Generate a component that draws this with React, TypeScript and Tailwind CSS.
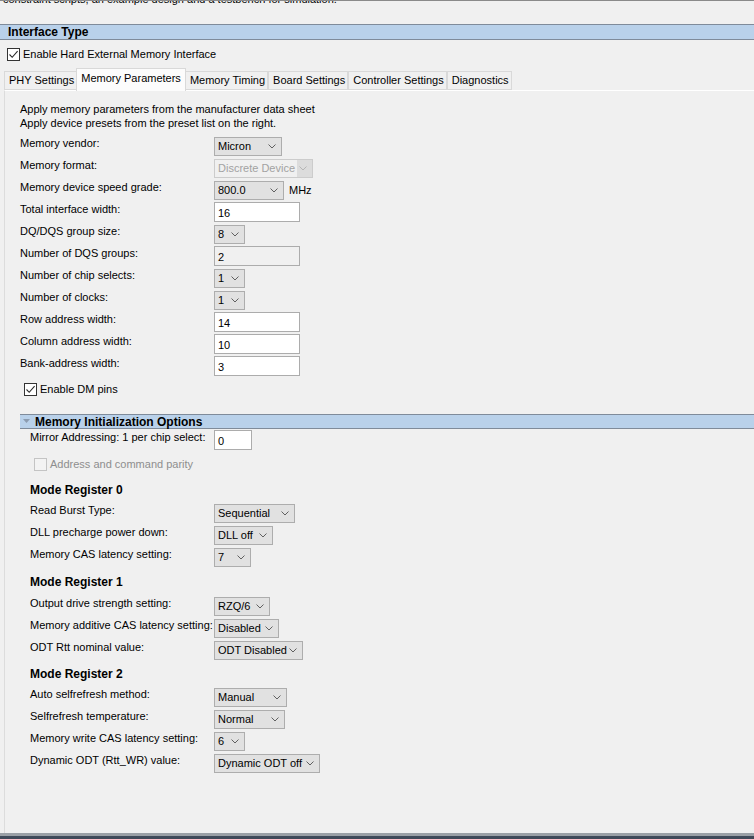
import React from "react";

const FONT = { fontFamily: '"Liberation Sans", Arial, sans-serif' };

function Check({ checked = false, disabled = false }: { checked?: boolean; disabled?: boolean }) {
  return (
    <span
      className={`flex h-[13px] w-[13px] shrink-0 items-center justify-center border ${
        disabled ? "border-[#c4c4c4] bg-[#f3f3f3]" : "border-[#333333] bg-white"
      }`}
    >
      {checked && (
        <svg width="11" height="11" viewBox="0 0 11 11">
          <path d="M1.5 5.5 L4.2 8.3 L9.6 2.2" fill="none" stroke="#2a2a2a" strokeWidth="1.1" />
        </svg>
      )}
    </span>
  );
}

function Chevron({ light = false }: { light?: boolean }) {
  return (
    <svg width="8" height="5" viewBox="0 0 8 5" className="shrink-0">
      <path d="M0.5 0.5 L4 4 L7.5 0.5" fill="none" stroke={light ? "#b5b5b5" : "#606060"} strokeWidth="1" />
    </svg>
  );
}

function Select({ value, w }: { value: string; w: string }) {
  return (
    <div
      className={`flex h-[19px] ${w} items-center justify-between border border-[#adadad] bg-[#e1e1e1] pl-[3px] pr-[5px] text-[11px] text-black`}
    >
      <span className="leading-none whitespace-nowrap">{value}</span>
      <Chevron />
    </div>
  );
}

function Field({ value, w = "w-[86px]", readOnly = false }: { value: string; w?: string; readOnly?: boolean }) {
  return (
    <div
      className={`flex h-[20px] ${w} items-center border border-[#acacac] ${
        readOnly ? "bg-[#f0f0f0]" : "bg-white"
      } px-[3px] pt-[2px] text-[11px] text-black`}
    >
      {value}
    </div>
  );
}

function Row({ label, labelW, children }: { label: string; labelW: string; children: React.ReactNode }) {
  return (
    <div className="flex h-[22px] items-center">
      <span className={`${labelW} mb-[5px] shrink-0 whitespace-nowrap text-[11px]`}>{label}</span>
      {children}
    </div>
  );
}

const tabs = ["PHY Settings", "Memory Parameters", "Memory Timing", "Board Settings", "Controller Settings", "Diagnostics"];

export default function App() {
  const L1 = "w-[194px]";
  const L2 = "w-[184px]";
  return (
    <div
      className="flex h-[839px] w-[754px] flex-col overflow-hidden border-t border-[#8a8a8a] bg-[#f0f0f0] text-black"
      style={FONT}
    >
      <div className="mt-[-9px] h-[14px] pl-[3px] text-[11px] leading-[14px] whitespace-nowrap">
        constraint scripts, an example design and a testbench for simulation.
      </div>

      <div className="mt-[18px] flex h-[16px] items-center border-y border-[#7f8b9a] bg-[#b9d1ea] pl-[8px]">
        <span className="text-[12px] font-bold leading-none">Interface Type</span>
      </div>

      <div className="mt-[7px] flex h-[14px] items-center gap-[3px] pl-[7px]">
        <Check checked />
        <span className="text-[11px]">Enable Hard External Memory Interface</span>
      </div>

      <div className="mt-[7px] flex h-[22px] items-end pl-[4px]">
        {tabs.map((t) =>
          t === "Memory Parameters" ? (
            <div
              key={t}
              className="z-10 -mx-[1px] -mb-[1px] flex h-[23px] items-center border border-b-0 border-[#d9d9d9] bg-[#fcfcfc] px-[4px] pb-[3px] text-[11px]"
            >
              {t}
            </div>
          ) : (
            <div
              key={t}
              className="flex h-[19px] items-center border border-[#d9d9d9] bg-[#f0f0f0] pl-[4px] pr-[2px] text-[11px]"
            >
              {t}
            </div>
          )
        )}
      </div>

      <div className="ml-[4px] flex flex-1 flex-col border-t border-l border-t-white border-l-[#dcdcdc] pt-[11px] pl-[15px]">
        <div className="text-[11px] leading-[14px]">Apply memory parameters from the manufacturer data sheet</div>
        <div className="text-[11px] leading-[14px]">Apply device presets from the preset list on the right.</div>

        <div className="mt-[5px] flex flex-col">
          <Row label="Memory vendor:" labelW={L1}>
            <Select value="Micron" w="w-[68px]" />
          </Row>
          <Row label="Memory format:" labelW={L1}>
            <div className="flex h-[19px] w-[99px] items-center justify-between border border-[#cccccc] bg-[#dcdcdc] pr-[5px] text-[11px]">
              <span className="h-full bg-[#f0f0f0] pl-[3px] pr-[2px] leading-[17px] text-[#a2a2a2]">Discrete Device</span>
              <Chevron light />
            </div>
          </Row>
          <Row label="Memory device speed grade:" labelW={L1}>
            <Select value="800.0" w="w-[70px]" />
            <span className="ml-[5px] text-[11px]">MHz</span>
          </Row>
          <Row label="Total interface width:" labelW={L1}>
            <Field value="16" />
          </Row>
          <Row label="DQ/DQS group size:" labelW={L1}>
            <Select value="8" w="w-[31px]" />
          </Row>
          <Row label="Number of DQS groups:" labelW={L1}>
            <Field value="2" readOnly />
          </Row>
          <Row label="Number of chip selects:" labelW={L1}>
            <Select value="1" w="w-[31px]" />
          </Row>
          <Row label="Number of clocks:" labelW={L1}>
            <Select value="1" w="w-[31px]" />
          </Row>
          <Row label="Row address width:" labelW={L1}>
            <Field value="14" />
          </Row>
          <Row label="Column address width:" labelW={L1}>
            <Field value="10" />
          </Row>
          <Row label="Bank-address width:" labelW={L1}>
            <Field value="3" />
          </Row>
        </div>

        <div className="mt-[4px] flex h-[16px] items-center gap-[3px] pl-[4px]">
          <Check checked />
          <span className="text-[11px]">Enable DM pins</span>
        </div>

        <div className="mt-[17px] flex h-[15px] items-center gap-[5px] border-y border-[#7f8b9a] bg-[#b9d1ea] pl-[3px]">
          <svg width="7" height="5" viewBox="0 0 7 5">
            <path d="M0 0 L7 0 L3.5 4 Z" fill="#8c9cb0" />
          </svg>
          <span className="text-[12px] font-bold leading-none">Memory Initialization Options</span>
        </div>

        <div className="flex flex-col pl-[10px]">
          <Row label="Mirror Addressing: 1 per chip select:" labelW={L2}>
            <Field value="0" w="w-[38px]" />
          </Row>

          <div className="mt-[5px] flex h-[16px] items-center gap-[3px] pl-[4px]">
            <Check disabled />
            <span className="text-[11px] text-[#8e8e8e]">Address and command parity</span>
          </div>

          <div className="mt-[9px] flex h-[18px] items-center text-[12px] font-bold">Mode Register 0</div>
          <div className="mt-[3px] flex flex-col">
            <Row label="Read Burst Type:" labelW={L2}>
              <Select value="Sequential" w="w-[81px]" />
            </Row>
            <Row label="DLL precharge power down:" labelW={L2}>
              <Select value="DLL off" w="w-[59px]" />
            </Row>
            <Row label="Memory CAS latency setting:" labelW={L2}>
              <Select value="7" w="w-[37px]" />
            </Row>
          </div>

          <div className="mt-[5px] flex h-[18px] items-center text-[12px] font-bold">Mode Register 1</div>
          <div className="mt-[4px] flex flex-col">
            <Row label="Output drive strength setting:" labelW={L2}>
              <Select value="RZQ/6" w="w-[56px]" />
            </Row>
            <Row label="Memory additive CAS latency setting:" labelW={L2}>
              <Select value="Disabled" w="w-[65px]" />
            </Row>
            <Row label="ODT Rtt nominal value:" labelW={L2}>
              <Select value="ODT Disabled" w="w-[89px]" />
            </Row>
          </div>

          <div className="mt-[4px] flex h-[18px] items-center text-[12px] font-bold">Mode Register 2</div>
          <div className="mt-[3px] flex flex-col">
            <Row label="Auto selfrefresh method:" labelW={L2}>
              <Select value="Manual" w="w-[73px]" />
            </Row>
            <Row label="Selfrefresh temperature:" labelW={L2}>
              <Select value="Normal" w="w-[71px]" />
            </Row>
            <Row label="Memory write CAS latency setting:" labelW={L2}>
              <Select value="6" w="w-[31px]" />
            </Row>
            <Row label="Dynamic ODT (Rtt_WR) value:" labelW={L2}>
              <Select value="Dynamic ODT off" w="w-[106px]" />
            </Row>
          </div>
        </div>
      </div>

      <div className="h-[3px] shrink-0 bg-[#9aa0a6]" />
      <div className="h-[3px] shrink-0 bg-[#3f4a59]" />
    </div>
  );
}
